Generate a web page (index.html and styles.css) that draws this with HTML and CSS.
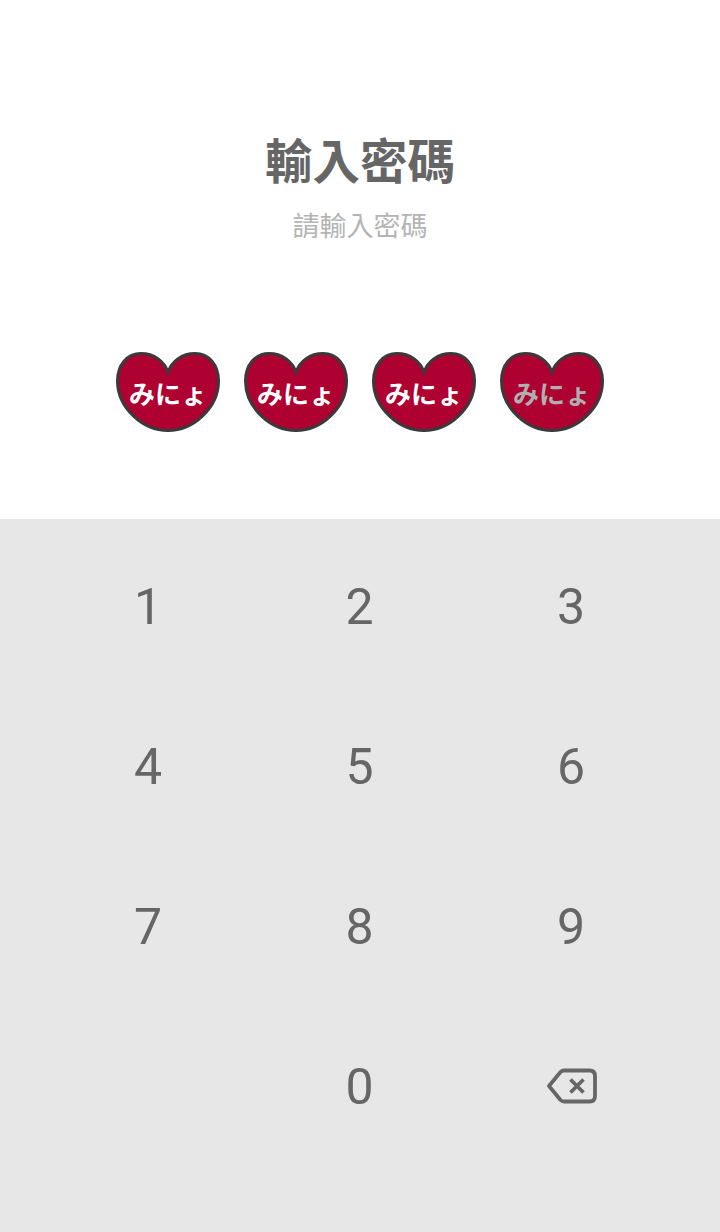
FILE: index.html
```html
<!DOCTYPE html>
<html lang="zh-Hant">
<head>
    <meta charset="UTF-8">
    <meta name="viewport" content="width=device-width, initial-scale=1.0">
    <title>輸入密碼</title>
    <link rel="stylesheet" href="styles.css">
</head>
<body>

<div class="top">
    <h1 class="title">輸入密碼</h1>
    <p class="subtitle">請輸入密碼</p>
    <div class="pins">
        <div class="pin">
            <svg class="heart" viewBox="0 0 104 82"><path d="M52 21C48 10 38 2.5 25 2.5C11 2.5 1.5 14 1.5 30C1.5 57 27 79.5 52 79.5C77 79.5 102.5 57 102.5 30C102.5 14 93 2.5 79 2.5C66 2.5 56 10 52 21Z"/></svg>
            <span class="pin-text">みにょ</span>
        </div>
        <div class="pin">
            <svg class="heart" viewBox="0 0 104 82"><path d="M52 21C48 10 38 2.5 25 2.5C11 2.5 1.5 14 1.5 30C1.5 57 27 79.5 52 79.5C77 79.5 102.5 57 102.5 30C102.5 14 93 2.5 79 2.5C66 2.5 56 10 52 21Z"/></svg>
            <span class="pin-text">みにょ</span>
        </div>
        <div class="pin">
            <svg class="heart" viewBox="0 0 104 82"><path d="M52 21C48 10 38 2.5 25 2.5C11 2.5 1.5 14 1.5 30C1.5 57 27 79.5 52 79.5C77 79.5 102.5 57 102.5 30C102.5 14 93 2.5 79 2.5C66 2.5 56 10 52 21Z"/></svg>
            <span class="pin-text">みにょ</span>
        </div>
        <div class="pin">
            <svg class="heart" viewBox="0 0 104 82"><path d="M52 21C48 10 38 2.5 25 2.5C11 2.5 1.5 14 1.5 30C1.5 57 27 79.5 52 79.5C77 79.5 102.5 57 102.5 30C102.5 14 93 2.5 79 2.5C66 2.5 56 10 52 21Z"/></svg>
            <span class="pin-text pin-empty">みにょ</span>
        </div>
    </div>
</div>

<div class="keypad">
    <div class="key">1</div>
    <div class="key">2</div>
    <div class="key">3</div>
    <div class="key">4</div>
    <div class="key">5</div>
    <div class="key">6</div>
    <div class="key">7</div>
    <div class="key">8</div>
    <div class="key">9</div>
    <div class="key"></div>
    <div class="key">0</div>
    <div class="key">
        <svg class="backspace" viewBox="0 0 52 36">
            <path d="M19 2.5H44.5C48 2.5 50 4.5 50 8V28C50 31.5 48 33.5 44.5 33.5H19C17.5 33.5 16.5 33 15.5 32L4 18L15.5 4C16.5 3 17.5 2.5 19 2.5Z"/>
            <path d="M25.5 11.5L38.5 24.5M38.5 11.5L25.5 24.5"/>
        </svg>
    </div>
</div>

</body>
</html>
```

FILE: styles.css
```css
body {
    margin: 0;
    width: 720px;
    height: 1232px;
    overflow: hidden;
    background-color: white;
    font-family: Roboto, "Noto Sans CJK TC", sans-serif;
}
.top {
    height: 519px;
    box-sizing: border-box;
    padding-top: 129px;
    text-align: center;
}
.title {
    margin: 0;
    font-family: "Noto Sans CJK TC", sans-serif;
    font-size: 47.5px;
    line-height: 60px;
    font-weight: 700;
    color: #666666;
}
.subtitle {
    margin: 18px 0 0;
    font-family: "Noto Sans CJK TC", sans-serif;
    font-size: 27px;
    line-height: 36px;
    color: #b4b4b4;
}
.pins {
    margin-top: 108px;
    display: flex;
    justify-content: center;
    gap: 24px;
}
.pin {
    width: 104px;
    height: 82px;
    display: grid;
    place-items: center;
}
.heart {
    grid-area: 1 / 1;
    width: 104px;
    height: 82px;
}
.heart path {
    fill: #ae0031;
    stroke: #3a3a3a;
    stroke-width: 3;
}
.pin-text {
    grid-area: 1 / 1;
    margin-top: 2px;
    font-family: "Noto Sans CJK JP", sans-serif;
    font-size: 26px;
    line-height: 30px;
    font-weight: 700;
    color: white;
}
.pin-empty {
    color: #b0b0b0;
}
.keypad {
    height: 713px;
    box-sizing: border-box;
    padding: 8px 0 0 42.25px;
    background-color: #e7e7e7;
    display: grid;
    grid-template-columns: repeat(3, 211.5px);
    grid-auto-rows: 160px;
}
.key {
    display: flex;
    justify-content: center;
    align-items: center;
    font-size: 50px;
    color: #666666;
}
.backspace {
    width: 52px;
    height: 36px;
    margin-bottom: 2px;
}
.backspace path {
    fill: none;
    stroke: #666666;
    stroke-width: 3.8;
    stroke-linejoin: round;
}
```
